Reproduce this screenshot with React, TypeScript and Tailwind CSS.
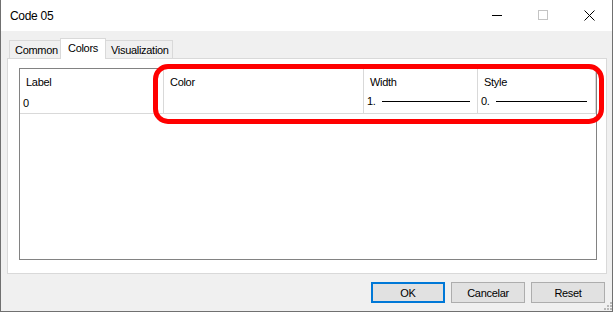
import React from "react";

function TitleBar() {
  return (
    <div className="h-[31px] flex items-start justify-between bg-white">
      <span className="pl-[9px] pt-[7px] text-[12px] tracking-[-0.3px] text-black">Code 05</span>
      <div className="flex">
        <div className="w-[46px] h-[30px] flex items-center justify-center">
          <div className="w-[10px] h-px bg-black mt-px" />
        </div>
        <div className="w-[46px] h-[30px] flex items-center justify-center">
          <div className="w-[10px] h-[10px] border border-[#c4c4c4]" />
        </div>
        <div className="w-[46px] h-[30px] flex items-center justify-center">
          <svg width="11" height="11" viewBox="0 0 11 11">
            <path d="M0.5 0.5 L10.5 10.5 M10.5 0.5 L0.5 10.5" stroke="#000" strokeWidth="1" />
          </svg>
        </div>
      </div>
    </div>
  );
}

function Tabs() {
  return (
    <div className="h-[20px] flex items-end pl-[2px]">
      <div className="w-[53px] h-[18px] border-l border-t border-[#d9d9d9] bg-[#f0f0f0] pl-[5px] pt-[2px] leading-[14px]">
        Common
      </div>
      <div className="relative z-10 -ml-[2px] -mb-px w-[46px] h-[21px] border-l border-t border-r border-[#d9d9d9] bg-white pl-[7px] pt-[2px] leading-[14px]">
        Colors
      </div>
      <div className="-ml-[2px] w-[69px] h-[18px] border-t border-r border-[#d9d9d9] bg-[#f0f0f0] pl-[7px] pt-[2px] leading-[14px]">
        Visualization
      </div>
    </div>
  );
}

function StyleCell({ value, last }: { value: string; last?: boolean }) {
  return (
    <div className={`flex items-center pl-[3px] ${last ? "pr-[8px]" : "pr-[7px]"}`}>
      <span>{value}</span>
      <div className="flex-1 h-px bg-black ml-[6px] mt-px" />
    </div>
  );
}

function Grid() {
  const cols = "grid grid-cols-[144px_200px_114px_118px]";
  return (
    <div className="flex-1 border border-[#828282] bg-white">
      <div className={cols}>
        <div className="h-[24px] border-r border-[#d9d9d9] pl-[6px] pt-[6px] leading-[14px]">Label</div>
        <div className="h-[24px] border-r border-[#d9d9d9] pl-[6px] pt-[6px] leading-[14px]">Color</div>
        <div className="h-[24px] border-r border-[#d9d9d9] pl-[6px] pt-[6px] leading-[14px]">Width</div>
        <div className="h-[24px] border-r border-[#d9d9d9] pl-[6px] pt-[6px] leading-[14px]">Style</div>
      </div>
      <div className={`${cols} h-[21px] border-b border-[#d9d9d9]`}>
        <div className="border-r border-[#d9d9d9] pl-[3px] pt-[3px] leading-[14px]">0</div>
        <div className="border-r border-[#d9d9d9]" />
        <div className="border-r border-[#d9d9d9]">
          <StyleCell value="1." />
        </div>
        <div className="border-r border-[#d9d9d9]">
          <StyleCell value="0." last />
        </div>
      </div>
    </div>
  );
}

function Buttons() {
  return (
    <div className="mt-[8px] h-[21px] flex justify-end gap-[6px] pr-[2px]">
      <button className="w-[74px] h-[21px] border-2 border-[#0078d7] bg-[#e1e1e1] leading-[14px]">OK</button>
      <button className="w-[74px] h-[21px] border border-[#adadad] bg-[#e1e1e1] leading-[14px]">Cancelar</button>
      <button className="w-[74px] h-[21px] border border-[#adadad] bg-[#e1e1e1] leading-[14px]">Reset</button>
    </div>
  );
}

export default function App() {
  return (
    <div className="relative w-[615px] h-[312px] bg-white font-['Liberation_Sans',Arial,sans-serif] text-[11px] tracking-[-0.3px] text-black">
      <div className="w-[613px] h-[312px] border-x border-b border-[#707070] flex flex-col">
        <TitleBar />
        <div className="flex-1 bg-[#f0f0f0] flex flex-col pl-[6px] pr-[5px] pt-[7px]">
          <Tabs />
          <div className="h-[216px] border border-[#d9d9d9] bg-white flex pl-[11px] pt-[9px] pr-[9px] pb-[13px]">
            <Grid />
          </div>
          <Buttons />
        </div>
      </div>

      {/* resize grip */}
      <svg className="absolute left-[603px] top-[301px]" width="10" height="10" viewBox="0 0 10 10">
        <g fill="#b8b8b8">
          <rect x="7" y="1" width="2" height="2" />
          <rect x="4" y="4" width="2" height="2" />
          <rect x="7" y="4" width="2" height="2" />
          <rect x="1" y="7" width="2" height="2" />
          <rect x="4" y="7" width="2" height="2" />
          <rect x="7" y="7" width="2" height="2" />
        </g>
      </svg>

      {/* red annotation */}
      <div className="absolute left-[153px] top-[64px] w-[451px] h-[60px] border-[5px] border-[#ff0000] rounded-[15px]" />
    </div>
  );
}
